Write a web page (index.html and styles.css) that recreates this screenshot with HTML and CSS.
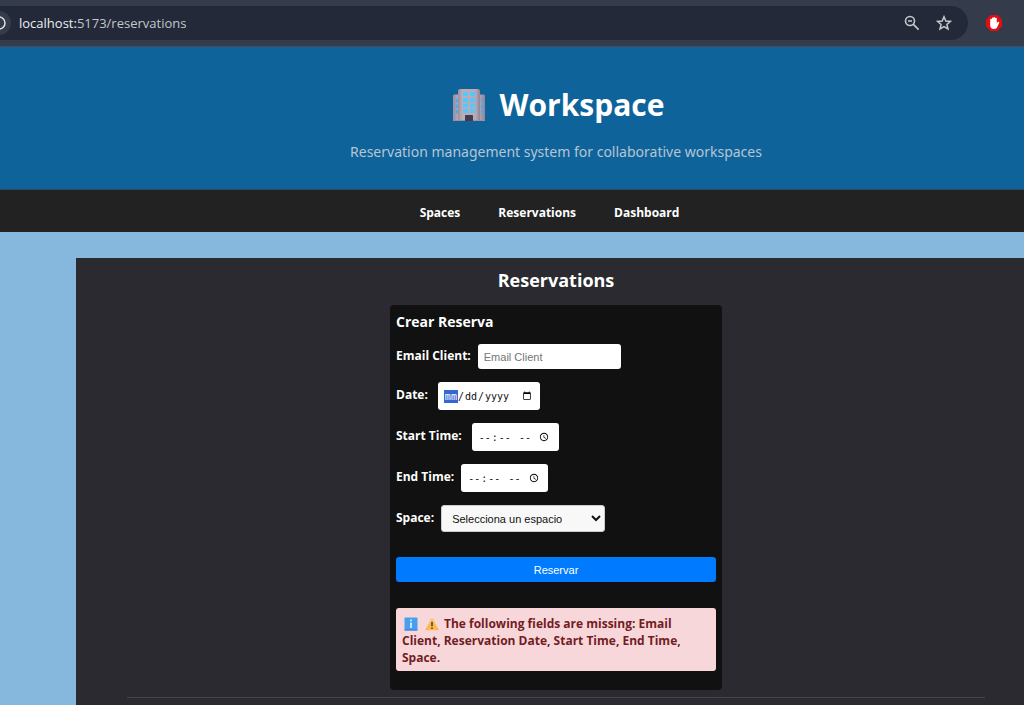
FILE: index.html
```html
<!DOCTYPE html>
<html lang="en">
<head>
<meta charset="utf-8">
<title>Workspace</title>
<link rel="stylesheet" href="styles.css">
</head>
<body>
<div class="toolbar">
  <div class="address">
    <span class="site-info"><svg width="14" height="14" viewBox="0 0 14 14"><circle cx="7" cy="7" r="6" fill="none" stroke="#dfe1e6" stroke-width="1.5"/></svg></span>
    <span class="url"><span class="host">localhost:</span>5173/reservations</span>
    <button class="tool" type="button" aria-label="Zoom"><svg width="16" height="16" viewBox="0 0 16 16" fill="none" stroke="#c5c8cf" stroke-width="1.6"><circle cx="6" cy="6" r="4.5"/><path d="M9.4 9.4 14.6 14.6M4 6h4"/></svg></button>
    <button class="tool" type="button" aria-label="Bookmark"><svg width="16" height="16" viewBox="0 0 16 16" fill="none" stroke="#c5c8cf" stroke-width="1.5"><path d="M8 1.800 9.800 6l4.600.4-3.500 3 1.100 4.500L8 11.500l-4 2.400 1.100-4.500-3.500-3L6.200 6z"/></svg></button>
  </div>
  <button class="extension" type="button" aria-label="Ad blocker"><svg width="16" height="16" viewBox="0 0 16 16"><path d="M4.700 0h6.600L16 4.700v6.600L11.300 16H4.700L0 11.300V4.700z" fill="#e40d12"/><path d="M4.200 8.500V4.600c0-1.100 1.600-1.100 1.600 0V3.400c0-1.100 1.700-1.100 1.700 0v-.6c0-1.100 1.700-1.100 1.700 0v.8c0-1.100 1.600-1.100 1.600 0v4.900l.8-1.300c.7-1 2-.4 1.500.7l-1.800 4c-.5 1.200-1.700 2-3.400 2-2.400 0-3.700-1.400-3.700-3.400z" fill="#fff"/></svg></button>
</div>
<header class="hero">
  <h1 class="brand">
    <svg class="building" width="34" height="34" viewBox="0 0 34 34">
      <defs><linearGradient id="wall"><stop offset="0" stop-color="#9c8f9e"/><stop offset=".2" stop-color="#b9afba"/><stop offset=".8" stop-color="#b5abb7"/><stop offset="1" stop-color="#91839a"/></linearGradient></defs>
      <path d="M1 8q0-1.500 1.500-1.500H8V33H1zM26 6.500h5.500Q33 6.500 33 8v25h-7z" fill="url(#wall)"/>
      <path d="M6 3q0-2 2-2h18q2 0 2 2v30H6z" fill="url(#wall)"/>
      <path d="M1 32h32v1H1z" fill="#9d93a0"/>
      <g fill="#55c8fb"><path d="M11 4h5v4h-5zM18 4h5v4h-5zM11 10h5v4h-5zM18 10h5v4h-5zM11 15.500h5v4h-5zM18 15.500h5v4h-5zM11 21h5v4h-5zM18 21h5v4h-5z"/><path d="M3.500 11H6v3.500H3.500zM3.500 16.500H6V20H3.500zM3.500 22H6v3.500H3.500zM29 11h2v3.500h-2zM29 16.500h2V20h-2zM29 22h2v3.500h-2z" fill="#4aacef"/></g>
      <path d="M13 28q0-1 1-1h6q1 0 1 1v5h-8z" fill="#48394f"/>
    </svg>
    <span>Workspace</span>
  </h1>
  <p class="tagline">Reservation management system for collaborative workspaces</p>
</header>
<nav class="menu">
  <a href="#spaces">Spaces</a>
  <a href="#reservations">Reservations</a>
  <a href="#dashboard">Dashboard</a>
</nav>
<main class="content">
  <h2 class="title">Reservations</h2>
  <form class="card" novalidate>
    <h3 class="card-title">Crear Reserva</h3>
    <div class="field"><label for="email">Email Client:</label><input class="control email" id="email" type="email" placeholder="Email Client"></div>
    <div class="field"><label for="date" class="spaced">Date:</label><input class="control date" id="date" type="date" autofocus></div>
    <div class="field"><label for="start" class="spaced">Start Time:</label><input class="control time" id="start" type="time"></div>
    <div class="field"><label for="end">End Time:</label><input class="control time" id="end" type="time"></div>
    <div class="field"><label for="space">Space:</label><select class="control space" id="space"><option>Selecciona un espacio</option></select></div>
    <button class="submit" type="button">Reservar</button>
    <p class="alert" role="alert"><svg class="mark" width="14" height="14" viewBox="0 0 14 14"><rect x=".5" y=".5" width="13" height="13" rx="1" fill="#46a0ee"/><path d="M.5 12.500h13v1H.5z" fill="#4577dc"/><path d="M7 5.500V11M7 2.500v1.700" stroke="#e9f5ff" stroke-width="1.600"/></svg><svg class="mark" width="14" height="14" viewBox="0 0 14 14"><path d="M6.300 2q.7-1 1.400 0l5.800 10.200q.4 1-.6 1H1.100q-1 0-.6-1z" fill="#fbb950"/><path d="M7 5v4.300M7 10.500V12" stroke="#4d3b3f" stroke-width="1.500"/></svg>The following fields are missing: Email Client, Reservation Date, Start Time, End Time, Space.</p>
  </form>
  <hr class="divider">
</main>
</body>
</html>
```
FILE: styles.css
```css
* { box-sizing: border-box; }

body {
  margin: 0;
  min-height: 100vh;
  display: flex;
  flex-direction: column;
  overflow: hidden;
  background: #86b8dd;
  color: #fff;
  font-family: "Segoe UI", "Open Sans", "Noto Sans", sans-serif;
}

h1, h2, h3, p { margin: 0; }

.toolbar {
  display: flex;
  align-items: center;
  gap: 18px;
  height: 47px;
  padding-right: 22px;
  background: #343c4c;
  border-bottom: 1px solid #474c57;
}

.address {
  flex: 1;
  display: flex;
  align-items: center;
  gap: 16px;
  height: 34px;
  padding-right: 16px;
  background: #232938;
  border-radius: 0 17px 17px 0;
}

.site-info {
  display: flex;
  align-items: center;
  justify-content: flex-end;
  width: 24px;
  height: 24px;
  margin-left: -13px;
  margin-right: -8px;
  padding-right: 5px;
  border-radius: 50%;
  background: #343c4c;
}

.url {
  flex: 1;
  color: #c3c6cd;
  font-size: 13px;
}

.host { color: #eceef2; }

.tool, .extension {
  display: flex;
  padding: 0;
  border: 0;
  background: none;
}

.hero {
  padding: 34px 0 26px 88px;
  background: #0f639b;
  border-bottom: 1px solid #35466b;
  text-align: center;
}

.brand {
  display: flex;
  align-items: center;
  justify-content: center;
  gap: 14px;
  padding-left: 4px;
  font-size: 30px;
  line-height: 48px;
}

.tagline {
  margin-top: 12px;
  color: #b7c5d2;
  font-family: "Segoe UI", "Noto Sans", sans-serif;
  font-size: 14px;
  line-height: 22px;
}

.menu {
  display: flex;
  justify-content: center;
  gap: 38px;
  padding: 14px 0 10px 75px;
  background: #222;
}

.menu a {
  color: #fff;
  font-size: 12px;
  font-weight: 700;
  line-height: 18px;
  text-decoration: none;
}

.content {
  flex: 1;
  margin: 26px 0 0 76px;
  padding: 10px 39px 0 51px;
  background: #2a2a30;
}

.title {
  font-size: 18px;
  line-height: 25px;
  text-align: center;
}

.card {
  display: flex;
  flex-direction: column;
  width: 332px;
  margin: 12px auto 7px;
  padding: 6px 6px 19px;
  background: #111;
  border-radius: 4px;
}

.card-title {
  margin-bottom: 12px;
  font-size: 14px;
  line-height: 21px;
}

.field {
  display: flex;
  align-items: center;
  gap: 7px;
  margin-bottom: 13px;
}

.field label {
  padding-bottom: 2px;
  font-size: 12px;
  font-weight: 700;
  line-height: 20px;
}

.field .spaced { margin-right: 3px; }

.control {
  height: 28px;
  padding: 6px;
  border: 0;
  border-radius: 3px;
  outline: 0;
  background: #fff;
  color: #111;
  font-family: "Liberation Sans", Arial, sans-serif;
  font-size: 11px;
}

.email { width: 143px; height: 25px; }

.date, .time { font-family: "DejaVu Sans Mono", monospace; font-size: 10px; }

.date { width: 102px; }

.time { width: 87px; }

.time::-webkit-datetime-edit { overflow: visible; }

.time::-webkit-datetime-edit-ampm-field {
  min-width: 16px;
  overflow: visible;
}

.time::-webkit-calendar-picker-indicator { margin-inline-start: 6px; }

.date::-webkit-datetime-edit-month-field:focus {
  background: #3d95e6 !important;
  color: #111 !important;
}

.space {
  width: 164px;
  height: 27px;
  border: 1px solid #ccc;
  background: #f8f8f8;
}

.submit {
  height: 25px;
  margin: 12px 0 26px;
  border: 0;
  border-radius: 3px;
  background: #007bff;
  color: #fff;
  font: 500 11px "Liberation Sans", Arial, sans-serif;
}

.alert {
  padding: 7px 6px 5px;
  border-radius: 3px;
  background: #f8d7da;
  color: #721c24;
  font-size: 12px;
  font-weight: 700;
  line-height: 17px;
}

.mark {
  margin: 0 5px 0 2px;
  vertical-align: -3px;
}

.divider {
  margin: 0;
  border: 0;
  border-top: 1px solid #45454a;
}
```
